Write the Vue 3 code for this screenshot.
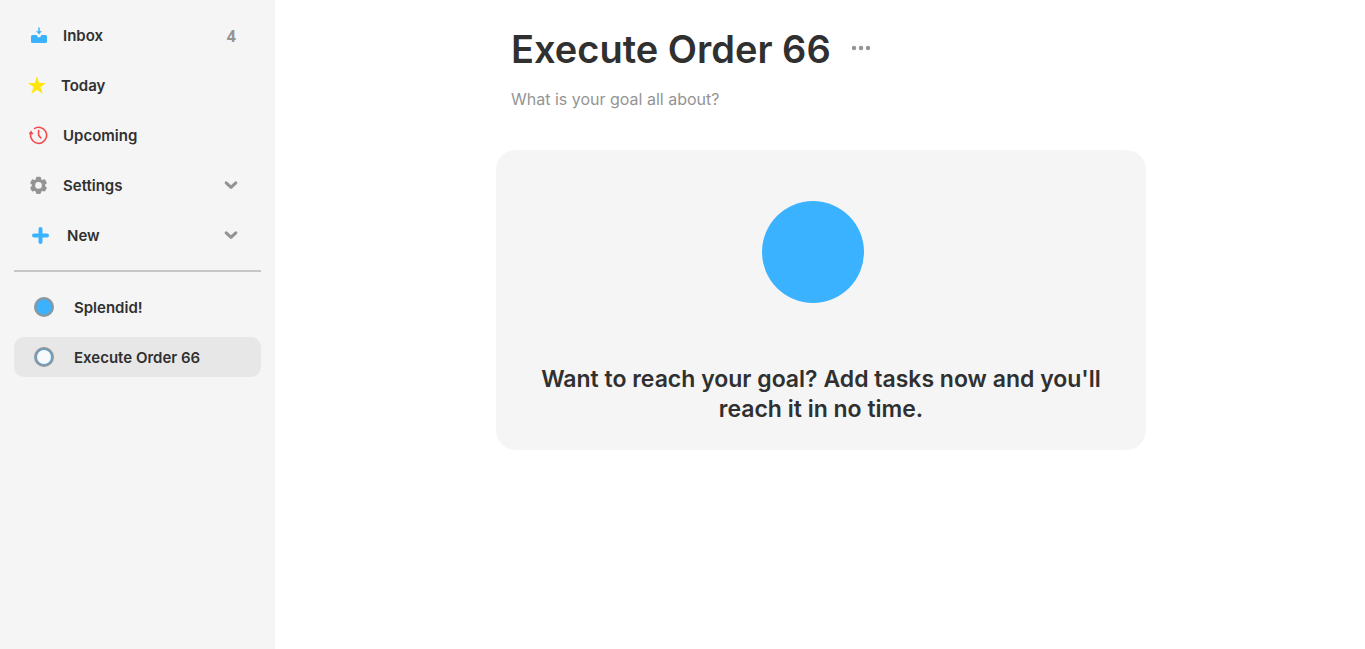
<script setup>
import { ref } from 'vue'

const goals = [
  { name: 'Splendid!', done: true },
  { name: 'Execute Order 66', done: false }
]
const selected = ref('Execute Order 66')
const description = ref('')
</script>

<template>
  <div class="app">
    <aside class="sidebar">
      <nav class="menu">
        <a class="row" href="#inbox">
          <svg class="icon" viewBox="-1 0 20 20" aria-hidden="true">
            <path d="M3.6 9H7.8C8 10.4 8.8 11.3 10 11.3S12 10.4 12.2 9H16.4Q18 9 18 10.6V15.4Q18 17 16.4 17H3.6Q2 17 2 15.4V10.6Q2 9 3.6 9Z" fill="#3ab2ff" />
            <path d="M10 1.6V7" fill="none" stroke="#3ab2ff" stroke-width="1.5" />
            <path d="M7 4.8L10 5.6L13 4.8L10 8.6Z" fill="#3ab2ff" />
          </svg>
          <span class="label">Inbox</span>
          <span class="count">4</span>
        </a>
        <a class="row" href="#today">
          <svg class="icon today-icon" viewBox="0 0.7 18 20" aria-hidden="true">
            <path d="M9 1L11.2 7.6H18L12.5 11.8L14.6 18.5L9 14.4L3.4 18.5L5.5 11.8L0 7.6H6.8Z" fill="#ffe60a" />
          </svg>
          <span class="label">Today</span>
        </a>
        <a class="row" href="#upcoming">
          <svg class="icon" viewBox="0 0.8 20 20" aria-hidden="true">
            <path d="M6 3.6A8 8 0 1 1 3 12.6M3 12.6A8 8 0 0 1 3 7.5" fill="none" stroke="#f4494d" stroke-width="1.6" />
            <path d="M0.6 8.9L3.1 5.4L5.6 9.1Z" fill="#f4494d" />
            <path d="M10.6 5.4V10L12.8 12.8" fill="none" stroke="#f4494d" stroke-width="1.6" stroke-linecap="round" stroke-linejoin="round" />
          </svg>
          <span class="label">Upcoming</span>
        </a>
        <button class="row" type="button">
          <svg class="icon" viewBox="-0.5 0.6 20 20" aria-hidden="true">
            <g fill="#949494">
              <rect v-for="angle in [0, 60, 120]" :key="angle" x="7.4" y="1.4" width="5.2" height="17.2" rx="1.4" :transform="`rotate(${angle} 10 10)`" />
              <circle cx="10" cy="10" r="6.7" />
            </g>
            <circle cx="10" cy="10" r="3.3" fill="#f5f5f5" />
          </svg>
          <span class="label">Settings</span>
          <svg class="chevron" viewBox="0 0.8 14 10" aria-hidden="true">
            <path d="M2.2 2.6L7 7.2L11.8 2.6" />
          </svg>
        </button>
        <button class="row" type="button">
          <svg class="icon plus-icon" viewBox="-0.5 0.5 20 20" aria-hidden="true">
            <path d="M10 3.5V16.5M3.5 10H16.5" fill="none" stroke="#3ab2ff" stroke-width="4" stroke-linecap="round" />
          </svg>
          <span class="label">New</span>
          <svg class="chevron" viewBox="0 0.8 14 10" aria-hidden="true">
            <path d="M2.2 2.6L7 7.2L11.8 2.6" />
          </svg>
        </button>
      </nav>
      <hr class="divider" />
      <nav class="menu">
        <button
          v-for="goal in goals"
          :key="goal.name"
          class="row goal"
          :class="{ selected: goal.name === selected }"
          type="button"
          @click="selected = goal.name"
        >
          <svg class="ring" viewBox="0 0 20 20" aria-hidden="true">
            <circle cx="10" cy="10" r="8.8" fill="#3ab2ff" stroke="#8a979f" stroke-width="2.4" />
            <circle v-if="!goal.done" cx="10" cy="10" r="7" fill="#f7f9fa" />
          </svg>
          <span class="label">{{ goal.name }}</span>
        </button>
      </nav>
    </aside>

    <main class="main">
      <div class="content">
        <header class="heading">
          <h1 class="title">Execute Order 66</h1>
          <button class="more" type="button" aria-label="More options">
            <svg class="dots" viewBox="0 0 20 6" aria-hidden="true">
              <circle cx="3" cy="3" r="2.2" />
              <circle cx="10" cy="3" r="2.2" />
              <circle cx="17" cy="3" r="2.2" />
            </svg>
          </button>
        </header>
        <input v-model="description" class="description" type="text" placeholder="What is your goal all about?" aria-label="Goal description" />
        <section class="card">
          <svg class="progress" viewBox="0 0 104 104" aria-hidden="true">
            <circle cx="52" cy="52" r="51" fill="#3ab2ff" />
          </svg>
          <p class="prompt">Want to reach your goal? Add tasks now and you'll reach it in no time.</p>
        </section>
      </div>
    </main>
  </div>
</template>

<style>
body {
  margin: 0;
  background: #fff;
}
</style>

<style scoped>
.app {
  display: flex;
  min-height: 100vh;
  color: #303030;
  font-family: Inter, "Liberation Sans", sans-serif;
}
.sidebar {
  box-sizing: border-box;
  flex: none;
  width: 275px;
  padding: 16px 14px;
  background: #f5f5f5;
}
.menu {
  display: flex;
  flex-direction: column;
  gap: 10px;
}
.row {
  box-sizing: border-box;
  display: flex;
  align-items: center;
  gap: 15px;
  width: 100%;
  height: 40px;
  padding: 0 23px 0 14px;
  border: 0;
  border-radius: 10px;
  background: none;
  color: inherit;
  font: 600 15px/20px Inter, "Liberation Sans", sans-serif;
  text-align: left;
  text-decoration: none;
  cursor: pointer;
}
.icon {
  flex: none;
  width: 20px;
  height: 20px;
}
.today-icon {
  width: 18px;
}
.plus-icon {
  margin: 0 2px;
}
.label {
  flex: 1;
}
.count {
  padding: 0 2px 1px 0;
  color: #949494;
  font-family: "Noto Sans", sans-serif;
  font-size: 16px;
  font-weight: 700;
}
.chevron {
  width: 14px;
  height: 10px;
  fill: none;
  stroke: #949494;
  stroke-width: 3;
  stroke-linecap: round;
  stroke-linejoin: round;
}
.divider {
  height: 2px;
  margin: 14px 0 15px;
  border: 0;
  background: #c6c6c6;
}
.goal {
  gap: 20px;
  padding-left: 20px;
}
.goal .label {
  padding-top: 2px;
}
.selected {
  background: #e7e7e7;
}
.ring {
  width: 20px;
  height: 20px;
}
.main {
  box-sizing: border-box;
  flex: 1;
  padding: 25px 20px 25px 22px;
}
.content {
  max-width: 650px;
  margin: 0 auto;
}
.heading {
  display: flex;
  align-items: center;
  gap: 18px;
  padding: 0 15px;
}
.title {
  margin: 0;
  font-size: 38px;
  font-weight: 600;
  line-height: 48px;
}
.more {
  display: flex;
  padding: 4px 2px 6px;
  border: 0;
  background: none;
  cursor: pointer;
}
.dots {
  width: 20px;
  height: 6px;
  fill: #949494;
}
.description {
  display: block;
  box-sizing: border-box;
  width: 100%;
  height: 30px;
  margin: 11px 0 36px;
  padding: 0 15px;
  border: 0;
  outline: 0;
  background: none;
  color: inherit;
  font: 400 16px/20px Inter, "Liberation Sans", sans-serif;
}
.description::placeholder {
  color: #949494;
  opacity: 1;
}
.card {
  display: flex;
  flex-direction: column;
  align-items: center;
  padding: 50px 36px 26px;
  border-radius: 20px;
  background: #f5f5f5;
}
.progress {
  width: 104px;
  height: 104px;
  margin-right: 16px;
}
.prompt {
  margin: 60px 0 0;
  font-size: 23px;
  font-weight: 600;
  line-height: 30px;
  text-align: center;
}
</style>
